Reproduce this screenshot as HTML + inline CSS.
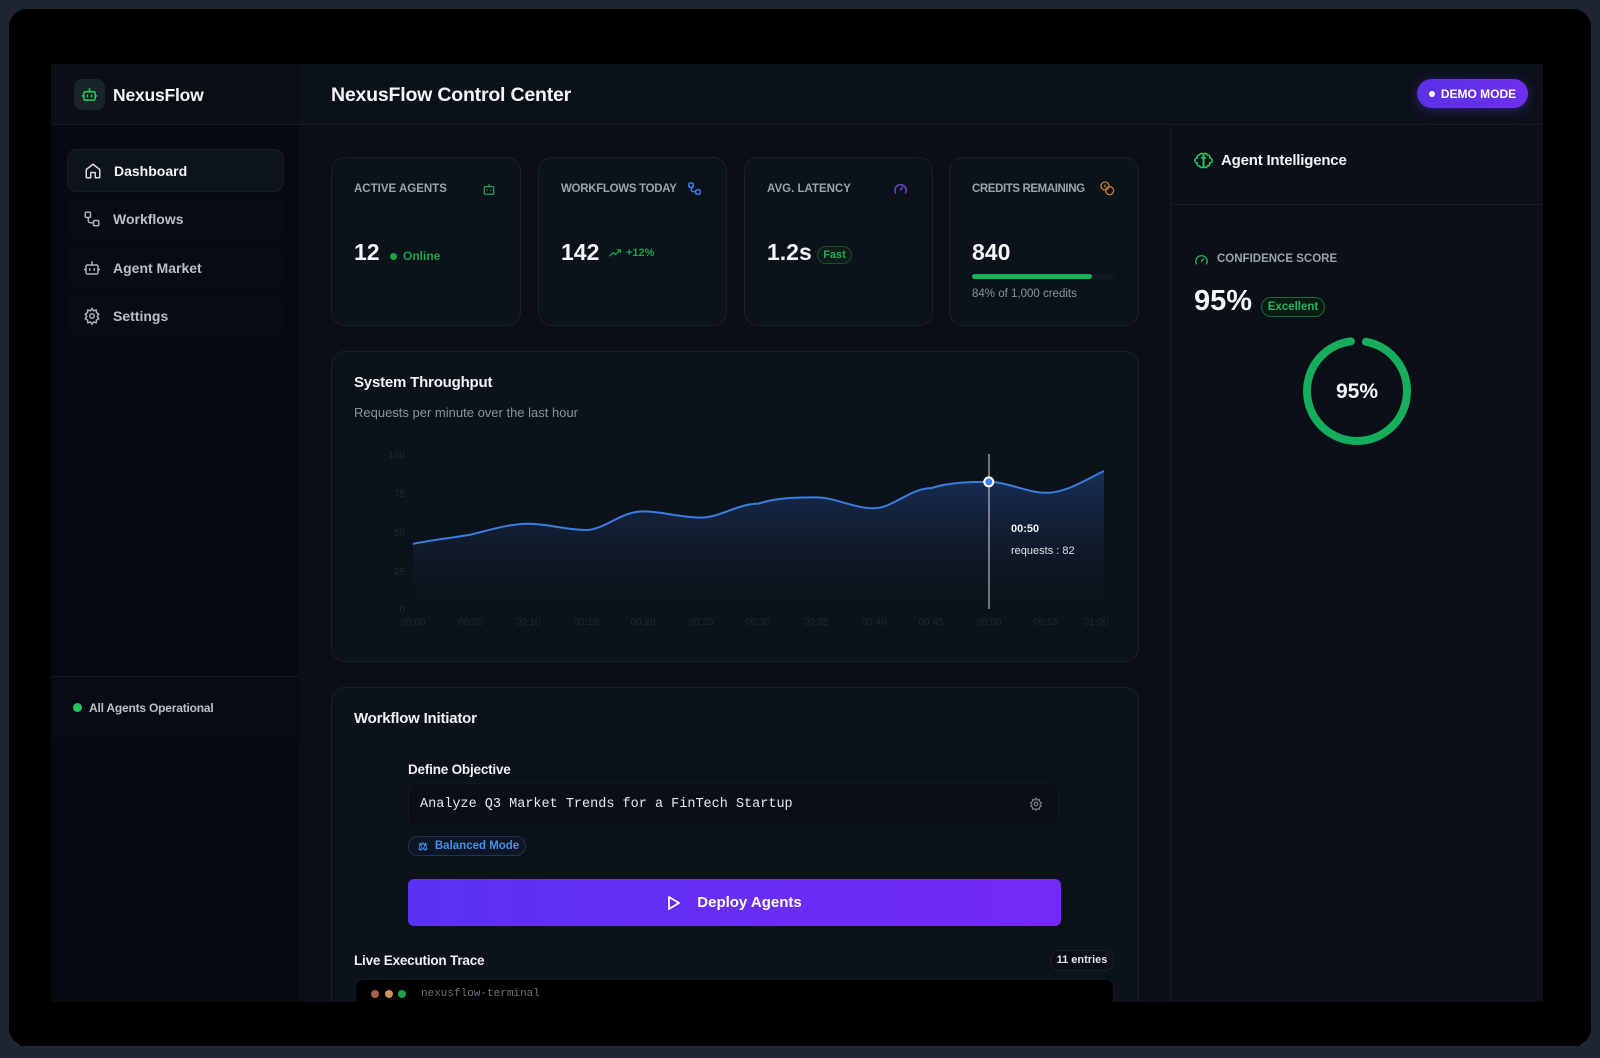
<!DOCTYPE html>
<html><head><meta charset="utf-8"><style>
*{box-sizing:border-box;margin:0;padding:0}
body{width:1600px;height:1058px;background:#1f2530;font-family:"Liberation Sans",sans-serif;position:relative;overflow:hidden;color:#e6e9ee}
.a{position:absolute}
.bezel{left:0;top:0;width:1600px;height:1058px;border-radius:22px;background:#1f2530}
.screen{left:9px;top:9px;width:1582px;height:1037px;background:#000;border-radius:18px}
.app{left:51px;top:64px;width:1492px;height:938px;background:#0a0f17;overflow:hidden}
.side{left:51px;top:64px;width:248px;height:938px;background:#060a10}
.card{background:#0c121a;border:1px solid #19202a;border-radius:14px}
.lbl{font-size:11.5px;color:#9aa3ae;font-weight:bold}
.nav{left:67px;width:217px;height:43px;border-radius:10px;font-size:14px;font-weight:bold;color:#b9c0c9;display:flex;align-items:center;padding-left:16px;gap:12px}
.val{font-size:23px;font-weight:bold;color:#f3f5f7}
.ax{font-size:10px;fill:#1f2733}
</style></head><body>
<div class="a bezel"></div>
<div class="a screen"></div>
<div class="a app"></div>
<div class="a side"></div>
<div class="a" style="left:51px;top:64px;width:248px;height:61px;background:#0a0e15;border-bottom:1px solid #141a23"></div>
<div class="a" style="left:299px;top:64px;width:1244px;height:61px;background:#0b1119;border-bottom:1px solid #161c25"></div>
<div class="a" style="left:51px;top:676px;width:248px;height:62px;background:#080c12;border-top:1px solid #141a23"></div>

<!-- logo -->
<div class="a" style="left:74px;top:79px;width:31px;height:31px;border-radius:8px;background:#172428"></div>
<svg class="a" style="left:81px;top:86px" width="17" height="17" viewBox="0 0 24 24" fill="none" stroke="#22c55e" stroke-width="2.2" stroke-linecap="round"><path d="M12 4v4"/><rect x="4" y="8" width="16" height="12" rx="2"/><path d="M2 14h2M20 14h2M9 13v2M15 13v2"/></svg>
<div class="a" style="left:113px;top:85px;font-size:17.5px;font-weight:bold;color:#f3f5f7;letter-spacing:-.2px">NexusFlow</div>

<div class="a nav" style="top:149px;background:#0d131b;border:1px solid #161d26;color:#f1f3f5">
<svg width="18" height="18" viewBox="0 0 24 24" fill="none" stroke="#d6dae0" stroke-width="2" stroke-linejoin="round"><path d="M3 10l9-7 9 7v10a1 1 0 0 1-1 1h-5v-7H9v7H4a1 1 0 0 1-1-1z"/></svg>Dashboard</div>
<div class="a nav" style="top:197px;background:#080c12">
<svg width="18" height="18" viewBox="0 0 24 24" fill="none" stroke="#aab1ba" stroke-width="2"><rect x="3" y="3" width="7" height="7" rx="1.5"/><rect x="14" y="14" width="7" height="7" rx="1.5"/><path d="M7 10v4a3 3 0 0 0 3 3h4"/></svg>Workflows</div>
<div class="a nav" style="top:246px;background:#080c12">
<svg width="18" height="18" viewBox="0 0 24 24" fill="none" stroke="#aab1ba" stroke-width="2" stroke-linecap="round"><path d="M12 4v4"/><rect x="4" y="8" width="16" height="12" rx="2"/><path d="M2 14h2M20 14h2M9 13v2M15 13v2"/></svg>Agent Market</div>
<div class="a nav" style="top:294px;background:#080c12">
<svg width="18" height="18" viewBox="0 0 24 24" fill="none" stroke="#aab1ba" stroke-width="2"><circle cx="12" cy="12" r="3"/><path d="M12 2l2 3 3.5-1 .5 3.5 3 2-2 3 2 3-3 2-.5 3.5-3.5-1-2 3-2-3-3.5 1L6 17.5l-3-2 2-3-2-3 3-2L6.5 4 10 5z"/></svg>Settings</div>

<div class="a" style="left:73px;top:703px;width:9px;height:9px;border-radius:50%;background:#22c55e"></div>
<div class="a" style="left:89px;top:701px;font-size:12px;font-weight:bold;color:#b9c0c9;letter-spacing:-.2px">All Agents Operational</div>

<div class="a" style="left:331px;top:84px;font-size:19.5px;font-weight:bold;color:#f3f5f7;letter-spacing:-.2px">NexusFlow Control Center</div>
<div class="a" style="left:1417px;top:79px;width:111px;height:29px;border-radius:15px;background:linear-gradient(90deg,#5b30e8,#6d2ff0);box-shadow:0 2px 10px rgba(100,60,240,.4);font-size:12px;font-weight:bold;color:#fff;display:flex;align-items:center;justify-content:center;gap:6px"><span style="width:6px;height:6px;border-radius:50%;background:#fff;display:inline-block"></span>DEMO MODE</div>

<!-- stat cards -->
<div class="a card" style="left:331px;top:157px;width:190px;height:169px"></div>
<div class="a card" style="left:538px;top:157px;width:189px;height:169px"></div>
<div class="a card" style="left:744px;top:157px;width:189px;height:169px"></div>
<div class="a card" style="left:949px;top:157px;width:190px;height:169px"></div>
<div class="a lbl" style="left:354px;top:183px">ACTIVE AGENTS</div>
<svg class="a" style="left:482px;top:182px" width="14" height="14" viewBox="0 0 24 24" fill="none" stroke="#1f9d55" stroke-width="2.2"><path d="M12 3v5"/><rect x="4" y="8" width="16" height="13" rx="2"/><path d="M9 13v2M15 13v2"/></svg>
<div class="a val" style="left:354px;top:239px">12</div>
<div class="a" style="left:390px;top:253px;width:7px;height:7px;border-radius:50%;background:#16a34a"></div>
<div class="a" style="left:403px;top:249px;font-size:12px;font-weight:bold;color:#16a34a">Online</div>

<div class="a lbl" style="left:561px;top:183px;letter-spacing:-.3px">WORKFLOWS TODAY</div>
<svg class="a" style="left:687px;top:181px" width="15" height="15" viewBox="0 0 24 24" fill="none" stroke="#3b82f6" stroke-width="2.2"><rect x="3" y="3" width="7" height="7" rx="2"/><rect x="14" y="14" width="7" height="7" rx="2"/><path d="M7 10v4a3 3 0 0 0 3 3h4"/></svg>
<div class="a val" style="left:561px;top:239px">142</div>
<svg class="a" style="left:609px;top:248px" width="13" height="10" viewBox="0 0 24 16" fill="none" stroke="#16a34a" stroke-width="2.4"><path d="M1 14l7-7 4 4 9-9M15 2h6v6"/></svg>
<div class="a" style="left:626px;top:247px;font-size:11px;font-weight:bold;color:#16a34a">+12%</div>

<div class="a lbl" style="left:767px;top:183px">AVG. LATENCY</div>
<svg class="a" style="left:893px;top:181px" width="15" height="15" viewBox="0 0 24 24" fill="none" stroke="#7c4ddb" stroke-width="2.2" stroke-linecap="round"><path d="M4 19a9 9 0 1 1 16 0"/><path d="M12 14l3-4"/></svg>
<div class="a val" style="left:767px;top:239px">1.2s</div>
<div class="a" style="left:817px;top:246px;width:35px;height:18px;border-radius:9px;border:1px solid #1f4a34;background:#0d1d18;font-size:11px;font-weight:bold;color:#22a85a;text-align:center;line-height:16px">Fast</div>

<div class="a lbl" style="left:972px;top:183px;letter-spacing:-.4px">CREDITS REMAINING</div>
<svg class="a" style="left:1099px;top:180px" width="16" height="16" viewBox="0 0 24 24" fill="none" stroke="#c27a3c" stroke-width="2"><circle cx="9" cy="9" r="6"/><circle cx="16" cy="16" r="6"/><path d="M9 7v4"/></svg>
<div class="a val" style="left:972px;top:239px">840</div>
<div class="a" style="left:972px;top:274px;width:142px;height:5px;border-radius:3px;background:#121821"></div>
<div class="a" style="left:972px;top:274px;width:120px;height:5px;border-radius:3px;background:#16b35a"></div>
<div class="a" style="left:972px;top:288px;font-size:11.5px;color:#8a929c">84% of 1,000 credits</div>

<!-- chart card -->
<div class="a card" style="left:331px;top:351px;width:808px;height:311px"></div>
<div class="a" style="left:354px;top:374px;font-size:15px;font-weight:bold;color:#f1f3f5;letter-spacing:-.2px">System Throughput</div>
<div class="a" style="left:354px;top:405px;font-size:13px;color:#8a929c">Requests per minute over the last hour</div>
<svg class="a" style="left:0;top:0" width="1600" height="700">
<defs><linearGradient id="g" x1="0" y1="0" x2="0" y2="1"><stop offset="0" stop-color="#1e3a6e" stop-opacity=".75"/><stop offset="1" stop-color="#0c121a" stop-opacity=".2"/></linearGradient></defs>
<g class="ax" text-anchor="end"><text x="405" y="458" class="ax">100</text><text x="405" y="497" class="ax">75</text><text x="405" y="536" class="ax">50</text><text x="405" y="575" class="ax">25</text><text x="405" y="613" class="ax">0</text></g>
<g text-anchor="middle" font-size="10" fill="#1f2733"><text x="413" y="625">00:00</text><text x="471" y="625">00:05</text><text x="528" y="625">00:10</text><text x="586" y="625">00:15</text><text x="643" y="625">00:20</text><text x="701" y="625">00:25</text><text x="758" y="625">00:30</text><text x="816" y="625">00:35</text><text x="874" y="625">00:40</text><text x="931" y="625">00:45</text><text x="989" y="625">00:50</text><text x="1046" y="625">00:55</text><text x="1096" y="625">01:00</text></g>
<path d="M413 543.9C432 540 451 538 470.6 534.6C490 530 509 523.8 528.2 523.8C548 523.8 566 530 585.7 530C605 530 620 511.4 643.3 511.4C662 511.4 680 517.6 700.9 517.6C720 517.6 738 503.6 758.5 503.6C778 497.4 797 497.4 816.1 497.4C835 497.4 854 508.3 873.6 508.3C893 508.3 910 488.1 931.2 488.1C950 482 970 481.9 988.8 481.9C1008 481.9 1027 492.8 1046.4 492.8C1066 492.8 1085 480 1104 471L1104 609L413 609Z" fill="url(#g)"/>
<path d="M413 543.9C432 540 451 538 470.6 534.6C490 530 509 523.8 528.2 523.8C548 523.8 566 530 585.7 530C605 530 620 511.4 643.3 511.4C662 511.4 680 517.6 700.9 517.6C720 517.6 738 503.6 758.5 503.6C778 497.4 797 497.4 816.1 497.4C835 497.4 854 508.3 873.6 508.3C893 508.3 910 488.1 931.2 488.1C950 482 970 481.9 988.8 481.9C1008 481.9 1027 492.8 1046.4 492.8C1066 492.8 1085 480 1104 471" fill="none" stroke="#3b7de0" stroke-width="2"/>
<line x1="989" y1="454" x2="989" y2="609" stroke="#d6dae0" stroke-width="1"/>
<circle cx="988.8" cy="481.9" r="4.5" fill="#3b82f6" stroke="#fff" stroke-width="2"/>
<text x="1011" y="532" font-size="11" font-weight="bold" fill="#eef0f3">00:50</text>
<text x="1011" y="554" font-size="11" fill="#dfe3e8">requests : 82</text>
</svg>

<!-- workflow card -->
<div class="a card" style="left:331px;top:687px;width:808px;height:340px"></div>
<div class="a" style="left:354px;top:710px;font-size:15px;font-weight:bold;color:#f1f3f5;letter-spacing:-.2px">Workflow Initiator</div>
<div class="a" style="left:408px;top:762px;font-size:13.5px;font-weight:bold;color:#eef0f3;letter-spacing:-.2px">Define Objective</div>
<div class="a" style="left:408px;top:783px;width:651px;height:43px;border-radius:8px;background:#0a0f16;border:1px solid #121820"></div>
<div class="a" style="left:420px;top:797px;font-family:'Liberation Mono',monospace;font-size:13.5px;color:#e6e9ee">Analyze Q3 Market Trends for a FinTech Startup</div>
<svg class="a" style="left:1029px;top:797px" width="14" height="14" viewBox="0 0 24 24" fill="none" stroke="#7a828c" stroke-width="2"><circle cx="12" cy="12" r="3"/><path d="M12 2l2 3 3.5-1 .5 3.5 3 2-2 3 2 3-3 2-.5 3.5-3.5-1-2 3-2-3-3.5 1L6 17.5l-3-2 2-3-2-3 3-2L6.5 4 10 5z"/></svg>
<div class="a" style="left:408px;top:836px;width:118px;height:20px;border-radius:10px;border:1px solid #1d3454;background:#0c1626;font-size:11.5px;font-weight:bold;color:#4a8fe8;display:flex;align-items:center;gap:7px;padding-left:9px"><span style="font-size:11px">⚖</span>Balanced Mode</div>
<div class="a" style="left:408px;top:879px;width:653px;height:47px;border-radius:6px;background:linear-gradient(90deg,#5a32f3,#7429f7);display:flex;align-items:center;justify-content:center;gap:16px;font-size:15px;font-weight:bold;color:#fff">
<svg width="14" height="16" viewBox="0 0 14 16" fill="none" stroke="#fff" stroke-width="1.8" stroke-linejoin="round"><path d="M2 2l10 6-10 6z"/></svg>Deploy Agents</div>
<div class="a" style="left:354px;top:953px;font-size:13.5px;font-weight:bold;color:#eef0f3;letter-spacing:-.2px">Live Execution Trace</div>
<div class="a" style="left:1050px;top:950px;width:64px;height:21px;border-radius:10px;border:1px solid #19202a;background:#0a0f16;font-size:11px;font-weight:bold;color:#dfe3e8;text-align:center;line-height:19px">11 entries</div>
<div class="a" style="left:355px;top:979px;width:759px;height:40px;border-radius:8px 8px 0 0;background:#000;border:1px solid #111720"></div>
<div class="a" style="left:371px;top:990px;width:8px;height:8px;border-radius:50%;background:#a0684a"></div>
<div class="a" style="left:385px;top:990px;width:8px;height:8px;border-radius:50%;background:#c99560"></div>
<div class="a" style="left:398px;top:990px;width:8px;height:8px;border-radius:50%;background:#16a34a"></div>
<div class="a" style="left:421px;top:988px;font-family:'Liberation Mono',monospace;font-size:11px;color:#6a727c">nexusflow-terminal</div>

<!-- clip bottom -->
<div class="a" style="left:20px;top:1002px;width:1560px;height:44px;background:#000"></div>
<div class="a" style="left:0;top:1046px;width:1600px;height:12px;background:#1f2530"></div>

<!-- right panel -->
<div class="a" style="left:1170px;top:125px;width:373px;height:877px;background:#0b1018;border-left:1px solid #161c25"></div>
<div class="a" style="left:1170px;top:204px;width:373px;height:1px;background:#161c25"></div>
<svg class="a" style="left:1194px;top:151px" width="19" height="19" viewBox="0 0 24 24" fill="none" stroke="#22c55e" stroke-width="2"><path d="M12 4a3 3 0 0 0-5 1 3 3 0 0 0-3 4 3 3 0 0 0 0 6 3 3 0 0 0 3 4 3 3 0 0 0 5 1z"/><path d="M12 4a3 3 0 0 1 5 1 3 3 0 0 1 3 4 3 3 0 0 1 0 6 3 3 0 0 1-3 4 3 3 0 0 1-5 1z"/><path d="M12 4v16M12 10l-3-2M12 10l3-2"/></svg>
<div class="a" style="left:1221px;top:152px;font-size:15px;font-weight:bold;color:#f1f3f5;letter-spacing:-.2px">Agent Intelligence</div>
<svg class="a" style="left:1194px;top:252px" width="15" height="15" viewBox="0 0 24 24" fill="none" stroke="#1fae5a" stroke-width="2.2" stroke-linecap="round"><path d="M4 19a9 9 0 1 1 16 0"/><path d="M12 15l3-4"/></svg>
<div class="a" style="left:1217px;top:253px;font-size:11.5px;font-weight:bold;color:#9aa3ae">CONFIDENCE SCORE</div>
<div class="a" style="left:1194px;top:285px;font-size:29px;font-weight:bold;color:#f3f5f7">95%</div>
<div class="a" style="left:1261px;top:297px;width:64px;height:20px;border-radius:10px;border:1px solid #1a6a3c;background:#0a1a14;font-size:11.5px;font-weight:bold;color:#22b55e;text-align:center;line-height:18px">Excellent</div>
<svg class="a" style="left:1300px;top:334px" width="114" height="114" viewBox="0 0 114 114"><circle cx="57" cy="57" r="50" fill="none" stroke="#16ad5c" stroke-width="8" stroke-dasharray="298.5 314.2" stroke-dashoffset="-9" transform="rotate(-90 57 57)" stroke-linecap="round"/></svg>
<div class="a" style="left:1300px;top:380px;width:114px;text-align:center;font-size:21px;font-weight:bold;color:#f3f5f7">95%</div>
</body></html>
